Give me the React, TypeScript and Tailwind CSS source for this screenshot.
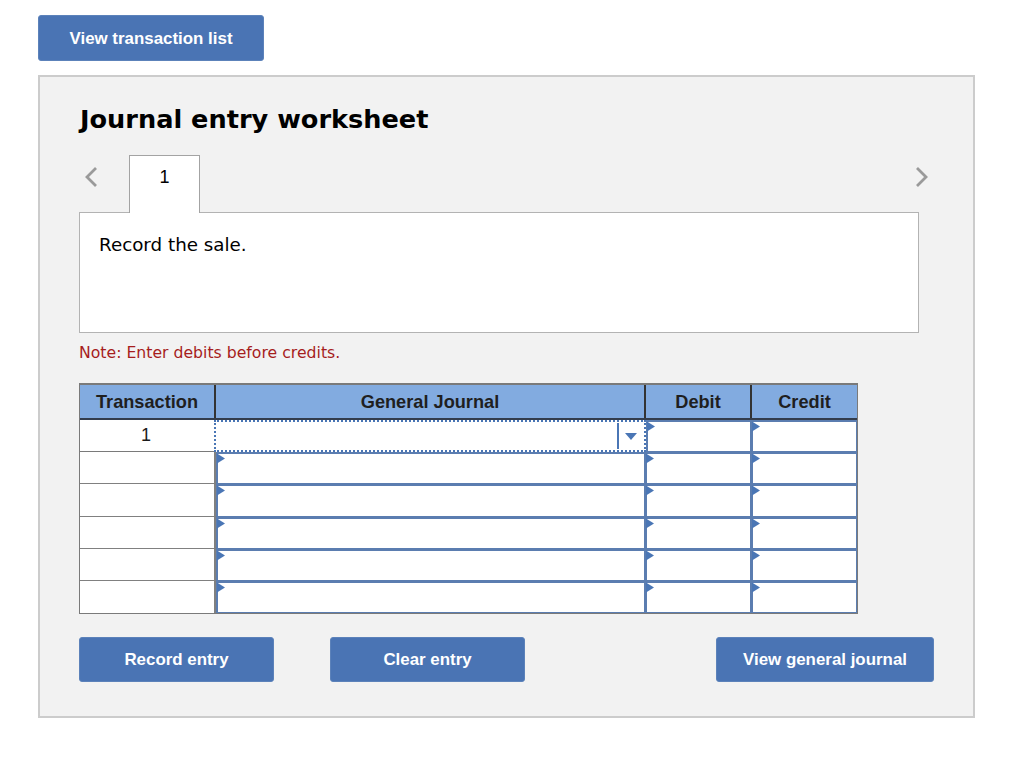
const rows = [1, 2, 3, 4, 5];

function Marker() {
  return (
    <svg className="absolute -left-px -top-px" width="9" height="11" viewBox="0 0 9 11">
      <path d="M0 0.5 L8 5.5 L0 10.5 Z" fill="#4a76b5" />
    </svg>
  );
}

function InputCell({ className }: { className: string }) {
  return (
    <div className={`relative border-t-2 border-l-2 border-r border-b border-[#5b7db0] bg-white ${className}`}>
      <Marker />
    </div>
  );
}

function Btn({ label, className }: { label: string; className: string }) {
  return (
    <button className={`rounded-[3px] bg-[#4a74b4] border border-[#5c82ba] pt-[2px] text-white font-bold text-[16.9px] leading-none ${className}`}>
      {label}
    </button>
  );
}

export default function App() {
  return (
    <div className="w-[1024px] h-[762px] bg-white pl-[38px] pt-[15px] font-['Liberation_Sans',Arial,sans-serif] text-[#1a1a1a]">
      <Btn label="View transaction list" className="h-[46px] w-[226px] block" />
      <div className="mt-[14px] w-[937px] h-[643px] border-2 border-[#cccccc] bg-[#f2f2f2] pl-[39px] pt-[26px]">
        <h1 className="ml-px font-['DejaVu_Sans',Verdana,sans-serif] font-bold text-[25.6px] leading-[32px] text-black">Journal entry worksheet</h1>
        <div className="mt-[20px] flex w-[850px] items-start">
          <svg className="mt-[11px] ml-[5px]" width="14" height="22" viewBox="0 0 14 22" fill="none">
            <path d="M12 2 L3 11 L12 20" stroke="#9a9a9a" strokeWidth="2.8" />
          </svg>
          <div className="relative z-10 ml-[31px] flex h-[58px] w-[71px] items-start justify-center border border-b-0 border-[#a3a3a3] bg-white pt-[10px] text-[18px] leading-[22px] text-black">1</div>
          <svg className="ml-auto mt-[11px]" width="14" height="22" viewBox="0 0 14 22" fill="none">
            <path d="M2 2 L11 11 L2 20" stroke="#9a9a9a" strokeWidth="2.8" />
          </svg>
        </div>
        <div className="-mt-px h-[121px] w-[840px] border border-[#b3b3b3] bg-white pl-[19px] pt-[21px] font-['DejaVu_Sans',Verdana,sans-serif] text-[18.3px] leading-[22px] text-black">Record the sale.</div>
        <p className="mt-[10px] font-['DejaVu_Sans',Verdana,sans-serif] text-[15.7px] leading-[20px] text-[#a61d1d]">Note: Enter debits before credits.</p>
        <div className="mt-[20px] w-[779px] border border-t-2 border-[#7a7a7a]">
          <div className="flex h-[35px] border-b-2 border-[#333d4d] bg-[#82abe0] text-[18.2px] font-bold text-[#1f1f1f]">
            <div className="flex w-[136px] items-center justify-center border-r-2 border-[#333333] pt-[2px]">Transaction</div>
            <div className="flex w-[430px] items-center justify-center border-r-2 border-[#333333] pt-[2px]">General Journal</div>
            <div className="flex w-[106px] items-center justify-center border-r-2 border-[#333333] pt-[2px]">Debit</div>
            <div className="flex w-[105px] items-center justify-center pt-[2px]">Credit</div>
          </div>
          <div className="flex h-[32.2px]">
            <div className="flex w-[134px] items-center justify-center border-b border-[#7a7a7a] bg-white text-[18px] pb-px pr-[2px]">1</div>
            <div className="relative flex w-[432px] border-2 border-dotted border-[#4a76b5] bg-white">
              <div className="ml-auto mr-px my-px flex w-[26px] items-center justify-center border-l-2 border-[#4a76b5]">
                <svg width="12" height="7" viewBox="0 0 12 7"><path d="M0 0 H12 L6 7 Z" fill="#4a76b5" /></svg>
              </div>
            </div>
            <InputCell className="w-[105px]" />
            <InputCell className="w-[106px]" />
          </div>
          {rows.map((r) => (
            <div key={r} className="flex h-[32.2px]">
              <div className={`w-[136px] border-r-2 border-[#808080] bg-white ${r < 5 ? "border-b" : ""}`} />
              <InputCell className="w-[429px]" />
              <InputCell className="w-[106px]" />
              <InputCell className="w-[106px]" />
            </div>
          ))}
        </div>
        <div className="mt-[23px] flex w-[855px]">
          <Btn label="Record entry" className="h-[45px] w-[195px]" />
          <Btn label="Clear entry" className="h-[45px] ml-[56px] w-[195px]" />
          <Btn label="View general journal" className="h-[45px] ml-auto w-[218px]" />
        </div>
      </div>
    </div>
  );
}
